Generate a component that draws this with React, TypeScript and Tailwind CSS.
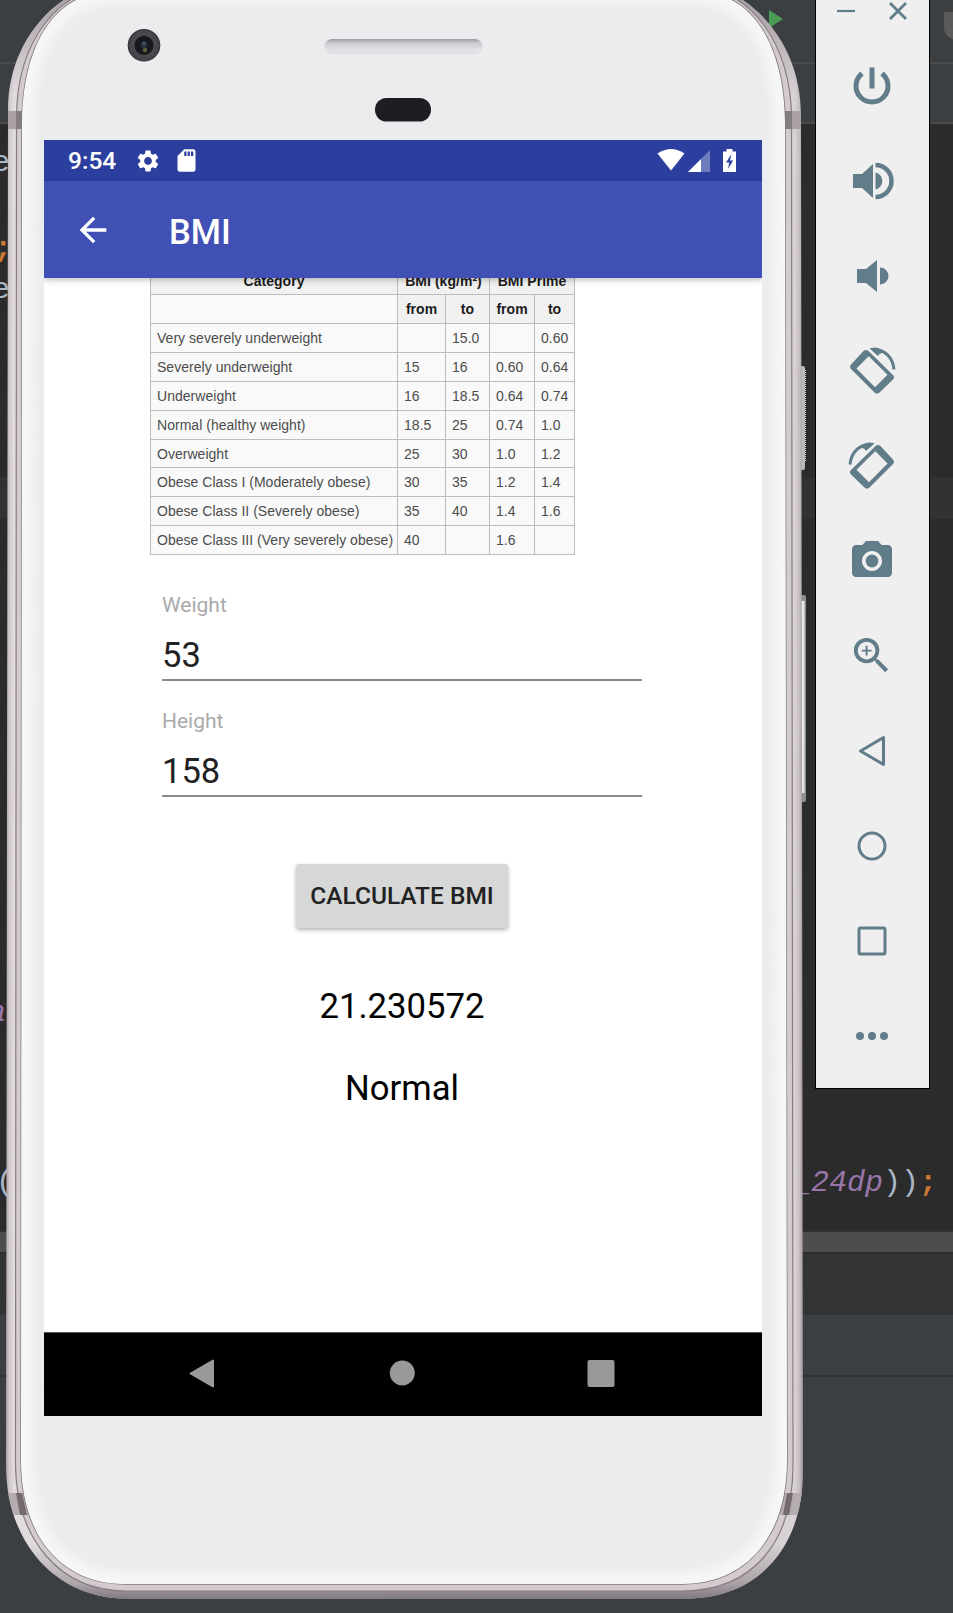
import React from 'react';
import { MdSettings, MdSdCard, MdArrowBack, MdPhotoCamera, MdZoomIn } from 'react-icons/md';

const OUTER =
  'M8 110 C8 37 62 -20 128 -20 L680 -20 C743 -20 801 37 801 115 L803 1472 C803 1545 760 1598.500 686 1598.500 L126 1598.500 C56 1598.500 6 1543 6 1465 Z';
const MIDDLE =
  'M16.500 118 C16.500 40 60 -14 118 -14 L690 -14 C750 -14 791.500 44 791.500 118 L793 1465 C793 1543 752 1591 682 1591 L126 1591 C60 1591 15.500 1540 15.500 1462 Z';
const FACE =
  'M22 125 C22 45 55 -8 110 -8 L698 -8 C752 -8 785 45 785 125 L787 1460 C787 1537 746 1584 682 1584 L125 1584 C60 1584 21 1535 21 1460 Z';

function DeviceFrame() {
  return (
    <svg className="absolute inset-0" width="953" height="1613" viewBox="0 0 953 1613" fill="none">
      <defs>
        <linearGradient id="rim" x1="6" x2="803" y1="0" y2="0" gradientUnits="userSpaceOnUse">
          <stop offset="0" stopColor="#aba3a7" />
          <stop offset="0.004" stopColor="#cfc7cb" />
          <stop offset="0.01" stopColor="#e2dbdf" />
          <stop offset="0.99" stopColor="#d8d1d5" />
          <stop offset="0.996" stopColor="#c4bbc0" />
          <stop offset="1" stopColor="#9b9297" />
        </linearGradient>
        <linearGradient id="rimEnds" x1="0" x2="0" y1="0" y2="1599" gradientUnits="userSpaceOnUse">
          <stop offset="0" stopColor="#8b8388" stopOpacity="0.65" />
          <stop offset="0.06" stopColor="#8b8388" stopOpacity="0" />
          <stop offset="0.965" stopColor="#7b7379" stopOpacity="0" />
          <stop offset="0.99" stopColor="#7b7379" stopOpacity="0.5" />
          <stop offset="1" stopColor="#7b7379" stopOpacity="0.95" />
        </linearGradient>
        <linearGradient id="slot" x1="0" x2="0" y1="39" y2="54" gradientUnits="userSpaceOnUse">
          <stop offset="0" stopColor="#9a9ca6" />
          <stop offset="0.3" stopColor="#cdced4" />
          <stop offset="0.8" stopColor="#e4e5e8" />
          <stop offset="1" stopColor="#dcdde0" />
        </linearGradient>
        <radialGradient id="lens">
          <stop offset="0" stopColor="#3a3f5c" />
          <stop offset="0.3" stopColor="#15151c" />
          <stop offset="0.55" stopColor="#19191d" />
          <stop offset="0.62" stopColor="#4b4c50" />
          <stop offset="0.9" stopColor="#434448" />
          <stop offset="1" stopColor="#2c2d30" />
        </radialGradient>
        <filter id="soft" x="-10%" y="-10%" width="120%" height="120%">
          <feGaussianBlur stdDeviation="4" />
        </filter>
        <clipPath id="faceClip"><path d={FACE} /></clipPath>
        <clipPath id="outerClip"><path d={OUTER} /></clipPath>
      </defs>
      <rect x="799" y="366" width="6" height="104" rx="2" fill="#b9bbbb" />
      <path d="M805.500 370V462" stroke="#d9dada" strokeDasharray="1 1" />
      <rect x="799" y="595" width="7" height="207" rx="2" fill="#8e908d" />
      <rect x="800" y="601" width="4.500" height="192" fill="#e4e7e4" />
      <path d={OUTER} fill="url(#rim)" />
      <path d={OUTER} fill="url(#rimEnds)" />
      <path d={MIDDLE} fill="#d3cbd0" stroke="#857d82" strokeWidth="1.200" />
      <g clipPath="url(#outerClip)">
        <path d="M7 111H22V129H7zM785 111H803V129H785z" fill="#aaa1a6" />
        <path d="M16 111H22V129H16zM785 111H792V129H785z" fill="#857c82" />
        <path d="M6 1493H30V1515H6zM780 1493H803V1515H780z" fill="#b5acb1" />
        <path d="M16 1493L20 1515H27L22 1493zM787 1493L783 1515H789L793 1493z" fill="#746b71" />
      </g>
      <path d={FACE} fill="#ebecee" stroke="#7d767b" strokeWidth="1.400" />
      <g clipPath="url(#faceClip)">
        <path d={FACE} stroke="#f6f6f8" strokeWidth="24" filter="url(#soft)" />
      </g>
      <circle cx="144" cy="45.300" r="16.300" fill="url(#lens)" />
      <circle cx="144" cy="43" r="1.500" fill="#4c547c" />
      <circle cx="145" cy="50" r="2.200" fill="#5e5e34" />
      <rect x="324.500" y="39" width="158" height="15" rx="7.500" fill="url(#slot)" />
      <path d="M330 47H477M330 50H477" stroke="#d0d1d6" strokeDasharray="1 2" />
      <rect x="375" y="98" width="56" height="23.500" rx="11.500" fill="#1d1e22" />
    </svg>
  );
}

function StatusBar() {
  return (
    <div className="flex h-[41px] items-center bg-[#2c3e9e] pl-6 text-white">
      <span className="w-[67px] pt-px text-[24.500px] leading-none font-medium">9:54</span>
      <MdSettings className="size-[26px]" />
      <MdSdCard className="ml-[12px] size-[27px]" />
      <div className="flex-1" />
      <svg width="118" height="41" viewBox="644 140 118 41">
        <path d="M657.500 153.500Q671 144.500 684.500 153.500L671 170.500Z" fill="#fff" />
        <path d="M688 172L710 150V172Z" fill="#fff" fillOpacity="0.32" />
        <path d="M688 172L701 159V172Z" fill="#fff" />
        <path d="M723 151.500H726.500V149H732.500V151.500H736V172H723Z" fill="#fff" />
        <path d="M731.500 154L726 162.500H729.200L728 169L733.200 160.500H730Z" fill="#2c3e9e" />
      </svg>
    </div>
  );
}

const rows = [
  ['Very severely underweight', '', '15.0', '', '0.60'],
  ['Severely underweight', '15', '16', '0.60', '0.64'],
  ['Underweight', '16', '18.5', '0.64', '0.74'],
  ['Normal (healthy weight)', '18.5', '25', '0.74', '1.0'],
  ['Overweight', '25', '30', '1.0', '1.2'],
  ['Obese Class I (Moderately obese)', '30', '35', '1.2', '1.4'],
  ['Obese Class II (Severely obese)', '35', '40', '1.4', '1.6'],
  ['Obese Class III (Very severely obese)', '40', '', '1.6', ''],
];

function BmiTable() {
  return (
    <div className="ml-[106px] h-[277px] w-[426px] overflow-hidden">
      <table className="-mt-[13px] w-[425px] table-fixed border-collapse border border-[#bcbcbc] bg-[#f9f9f9] font-['Liberation_Sans',sans-serif] text-[14px] leading-none tracking-[0.03px] text-[#4c4c4c] [&_td]:border [&_td]:border-[#bcbcbc] [&_td]:p-0 [&_td]:pl-[6px] [&_td]:whitespace-nowrap [&_th]:border [&_th]:border-[#bcbcbc] [&_th]:p-0 [&_th]:text-[#1c1c1c]">
        <colgroup>
          <col className="w-[247px]" />
          <col className="w-[48px]" />
          <col className="w-[44px]" />
          <col className="w-[45px]" />
          <col className="w-[40px]" />
        </colgroup>
        <thead>
          <tr className="h-[29px] bg-[#f1f1f1] text-[14px] [&>th]:pt-[2px]">
            <th>Category</th>
            <th colSpan={2} className="whitespace-nowrap">BMI (kg/m²)</th>
            <th colSpan={2}>BMI Prime</th>
          </tr>
          <tr className="h-[29px] bg-[#f1f1f1]">
            <th className="bg-[#f9f9f9]" />
            <th>from</th>
            <th>to</th>
            <th>from</th>
            <th>to</th>
          </tr>
        </thead>
        <tbody>
          {rows.map((r) => (
            <tr key={r[0]} className="h-[28.900px]">
              {r.map((c, i) => (
                <td key={i}>{c}</td>
              ))}
            </tr>
          ))}
        </tbody>
      </table>
    </div>
  );
}

function Field({ label, value }: { label: string; value: string }) {
  return (
    <div className="ml-[118px] h-[115.500px] w-[480px]">
      <div className="h-[38px] text-[21px] leading-[25px] text-[#aaa]">{label}</div>
      <div className="h-[50px] border-b-2 border-[#8a8a8a] text-[34.500px] leading-[48px] text-[#222]">{value}</div>
    </div>
  );
}

function Screen() {
  return (
    <div className="absolute top-[140px] left-[44px] flex h-[1276px] w-[718px] flex-col overflow-hidden bg-white font-[Roboto,sans-serif]">
      <StatusBar />
      <div className="relative flex h-[97px] shrink-0 items-center bg-[#4150b5] pl-[29px] text-white shadow-[0_2px_6px_rgba(0,0,0,0.25)]">
        <MdArrowBack className="size-[40px]" />
        <span className="ml-[56px] pt-[5px] text-[34.500px] leading-none font-medium">BMI</span>
      </div>
      <BmiTable />
      <div className="h-[38px] shrink-0" />
      <Field label="Weight" value="53" />
      <Field label="Height" value="158" />
      <div className="flex w-[716px] flex-1 flex-col items-center">
        <button className="mt-[40px] h-[64px] w-[212px] rounded-[3px] bg-[#d6d7d7] text-[24.500px] font-medium text-[#222] shadow-[0_2px_4px_rgba(0,0,0,0.3)]">CALCULATE BMI</button>
        <div className="mt-[58px] text-[34.700px] leading-[41px] text-black">21.230572</div>
        <div className="mt-[41px] text-[34.700px] leading-[41px] text-black">Normal</div>
      </div>
      <div className="flex h-[84px] shrink-0 items-center border-t border-[#555] bg-black">
        <svg width="718" height="83" viewBox="44 1333 718 83" fill="#999">
          <path d="M190.500 1373.500L213 1360.500V1386.500Z" stroke="#999" strokeWidth="2" strokeLinejoin="round" />
          <circle cx="402.300" cy="1373" r="12.500" />
          <rect x="587.500" y="1360" width="27" height="27" rx="2" />
        </svg>
      </div>
    </div>
  );
}

function Slot({ children }: { children?: React.ReactNode }) {
  return <div className="flex h-[95px] w-full items-center justify-center">{children}</div>;
}

function RotateIcon() {
  return (
    <svg width="48" height="48" viewBox="0 0 48 48" fill="currentColor">
      <path
        fillRule="evenodd"
        d="M15.500 4Q18 1.800 20.500 4L45 28Q47.200 30.300 45 32.500L31.500 45.500Q29 47.800 26.500 45.500L3 22Q1 19.800 3 17.500ZM20.700 9.200L8.500 21.600L27 40.200L39.500 27.700Z"
      />
      <path d="M21.500 1.500Q25 -0.200 32 2.500L34 6L31.500 7L30 9Z" />
      <path d="M26 1.800Q44 4.500 46 22.500" fill="none" stroke="currentColor" strokeWidth="3" />
    </svg>
  );
}

function EmulatorToolbar() {
  const s = { stroke: 'currentColor', fill: 'none' };
  return (
    <div className="absolute top-0 left-[815px] flex h-[1089px] w-[115px] flex-col border-x border-b border-black bg-[#efefef] pr-[2px] text-[#617d8a]">
      <div className="flex h-[38px] justify-between pt-px pr-[20px] pl-[21px]">
        <svg width="18" height="20" {...s} strokeWidth="2.200"><path d="M0 10H18" /></svg>
        <svg width="18" height="20" {...s} strokeWidth="2.800"><path d="M1 2L17 18M17 2L1 18" /></svg>
      </div>
      <Slot>
        <svg width="48" height="48" viewBox="0 0 48 48" {...s} strokeWidth="5"><path d="M24 5.500V26.500M14 11.500A16 16 0 1 0 34 11.500" /></svg>
      </Slot>
      <Slot>
        <svg width="48" height="48" viewBox="0 0 48 48" fill="currentColor">
          <path d="M5 17H14L25 7V41L14 31H5ZM27.500 15.500A8.700 8.700 0 0 1 27.500 32.500Z" />
          <path d="M27.500 8A16 16 0 0 1 27.500 40" fill="none" stroke="currentColor" strokeWidth="4.500" />
        </svg>
      </Slot>
      <Slot>
        <svg width="48" height="48" viewBox="0 0 48 48" fill="currentColor">
          <path d="M9 17H18L29 8V40L18 31H9ZM32 15.500A8.500 8.500 0 0 1 32 32.500Z" />
        </svg>
      </Slot>
      <Slot><RotateIcon /></Slot>
      <Slot><div className="-scale-x-100"><RotateIcon /></div></Slot>
      <Slot><MdPhotoCamera className="size-[48px]" /></Slot>
      <Slot><MdZoomIn className="size-[47px]" /></Slot>
      <Slot>
        <svg width="48" height="48" viewBox="0 0 48 48" {...s} strokeWidth="3" strokeLinejoin="round"><path d="M12.500 24L35.500 10.500V37.500Z" /></svg>
      </Slot>
      <Slot>
        <svg width="48" height="48" viewBox="0 0 48 48" {...s} strokeWidth="3"><circle cx="24" cy="24" r="13" /></svg>
      </Slot>
      <Slot>
        <svg width="48" height="48" viewBox="0 0 48 48" {...s} strokeWidth="3"><rect x="11" y="11" width="26" height="26" rx="1.500" /></svg>
      </Slot>
      <Slot>
        <svg width="48" height="48" viewBox="0 0 48 48" fill="currentColor"><circle cx="12" cy="24" r="4" /><circle cx="24" cy="24" r="4" /><circle cx="36" cy="24" r="4" /></svg>
      </Slot>
    </div>
  );
}

function Ide() {
  return (
    <div className="flex h-full flex-col bg-[#3c3f41] font-['Liberation_Mono',monospace] text-[30px] leading-none">
      <div className="flex h-[62px] justify-end">
        <div className="mt-3 -mr-4 h-7 w-[25px] rounded-b-2xl bg-[#5a5a5a]" />
      </div>
      <div className="h-[2px] bg-[#4b4b4b]" />
      <div className="h-[58px]" />
      <div className="h-[2px] bg-[#4b4b4b]" />
      <div className="relative h-[1106px] bg-[#2b2b2b]">
        <div className="absolute top-[353px] h-[42px] w-full bg-[#323232]" />
        <span className="absolute top-[24px] -left-[8px] text-[#a9b7c6]">e</span>
        <span className="absolute top-[110px] -left-[6px] font-bold text-[#cc7832]">;</span>
        <span className="absolute top-[151px] -left-[8px] text-[#a9b7c6]">e</span>
        <span className="absolute top-[874px] -left-[12px] text-[#9876aa] italic">a</span>
        <span className="absolute top-[1044px] -left-[4px] text-[#a9b7c6]">(</span>
        <span className="absolute top-[1044px] left-[793px] text-[#a9b7c6]">
          <i className="text-[#9876aa]">_24dp</i>))<b className="text-[#cc7832]">;</b>
        </span>
      </div>
      <div className="h-[2px] bg-[#313131]" />
      <div className="h-[20px] bg-[#4d4d4d]" />
      <div className="h-[2px] bg-[#2b2b2b]" />
      <div className="h-[61px] bg-[#313335]" />
      <div className="h-[60px]" />
      <div className="h-[2px] bg-[#323232]" />
      <svg className="absolute top-[9px] left-[766px]" width="20" height="22"><path d="M3 1L17 10L3 19Z" fill="#499c54" /></svg>
    </div>
  );
}

export default function App() {
  return (
    <div className="relative h-[1613px] w-[953px] overflow-hidden">
      <Ide />
      <DeviceFrame />
      <Screen />
      <EmulatorToolbar />
    </div>
  );
}
